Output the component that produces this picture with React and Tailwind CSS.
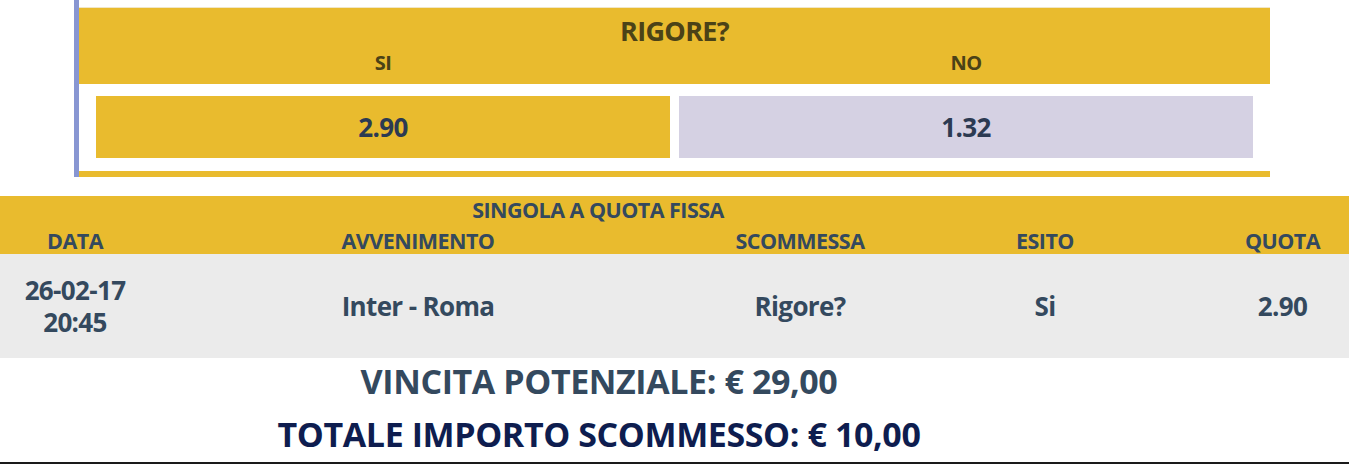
import React from "react";

const columns = [
  { label: "DATA", value: ["26-02-17", "20:45"] },
  { label: "AVVENIMENTO", value: ["Inter - Roma"] },
  { label: "SCOMMESSA", value: ["Rigore?"] },
  { label: "ESITO", value: ["Si"] },
  { label: "QUOTA", value: ["2.90"] },
];

const App = () => {
  return (
    <div className="w-[1349px] h-[465px] bg-white font-['Open_Sans',sans-serif] font-bold overflow-hidden">
      {/* market box */}
      <div className="ml-[74px] w-[1196px] border-l-[5px] border-[#8896d2] pt-[7px]">
        <div className="border-b-[6px] border-[#e9bb2e]">
          <div className="h-[77px] bg-[#e9bb2e] border-t border-[#f0e6c8] flex flex-col">
            <h2 className="text-center text-[27px] leading-none pt-[9px] text-[#4b4217] tracking-tight">
              RIGORE?
            </h2>
            <div className="grid grid-cols-2 gap-[9px] px-[17px] pt-[9px] text-[20px] leading-none text-[#4b4217] tracking-tight">
              <span className="text-center">SI</span>
              <span className="text-center">NO</span>
            </div>
          </div>
          <div className="grid grid-cols-2 gap-[9px] px-[17px] pt-[12px] pb-[13px]">
            <button className="h-[62px] bg-[#e9bb2e] text-[26px] text-[#2c3a52] tracking-tight">
              2.90
            </button>
            <button className="h-[62px] bg-[#d5d1e3] text-[26px] text-[#2c3a52] tracking-tight">
              1.32
            </button>
          </div>
        </div>
      </div>

      {/* ticket table */}
      <div className="mt-[19px] text-[#34495e]">
        <div className="h-[58px] bg-[#e9bb2e] flex flex-col">
          <div className="w-[1196px] text-center text-[21.5px] leading-none pt-[3px] tracking-tight">
            SINGOLA A QUOTA FISSA
          </div>
          <div className="grid grid-cols-[150px_536px_228px_262px_1fr] text-[21.5px] leading-none pt-[9px] tracking-tight">
            {columns.map((col, i) => (
              <span key={col.label} className={`text-center ${i === 4 ? "pl-[40px]" : ""}`}>
                {col.label}
              </span>
            ))}
          </div>
        </div>
        <div className="h-[104px] bg-[#ebebeb] grid grid-cols-[150px_536px_228px_262px_1fr] items-center text-[26px] leading-[32px] tracking-tight">
          {columns.map((col, i) => (
            <div key={col.label} className={`text-center ${i === 4 ? "pl-[40px]" : ""}`}>
              {col.value.map((line) => (
                <div key={line}>{line}</div>
              ))}
            </div>
          ))}
        </div>
      </div>

      {/* totals */}
      <div className="w-[1198px] text-center tracking-tight">
        <div className="text-[34px] leading-none pt-[6px] text-[#34495e]">
          VINCITA POTENZIALE: € 29,00
        </div>
        <div className="text-[34px] leading-none pt-[19px] text-[#0e1d4f]">
          TOTALE IMPORTO SCOMMESSO: € 10,00
        </div>
      </div>
      <div className="mt-[11px] h-[2px] bg-[#1a1a1a]" />
    </div>
  );
};

export default App;
